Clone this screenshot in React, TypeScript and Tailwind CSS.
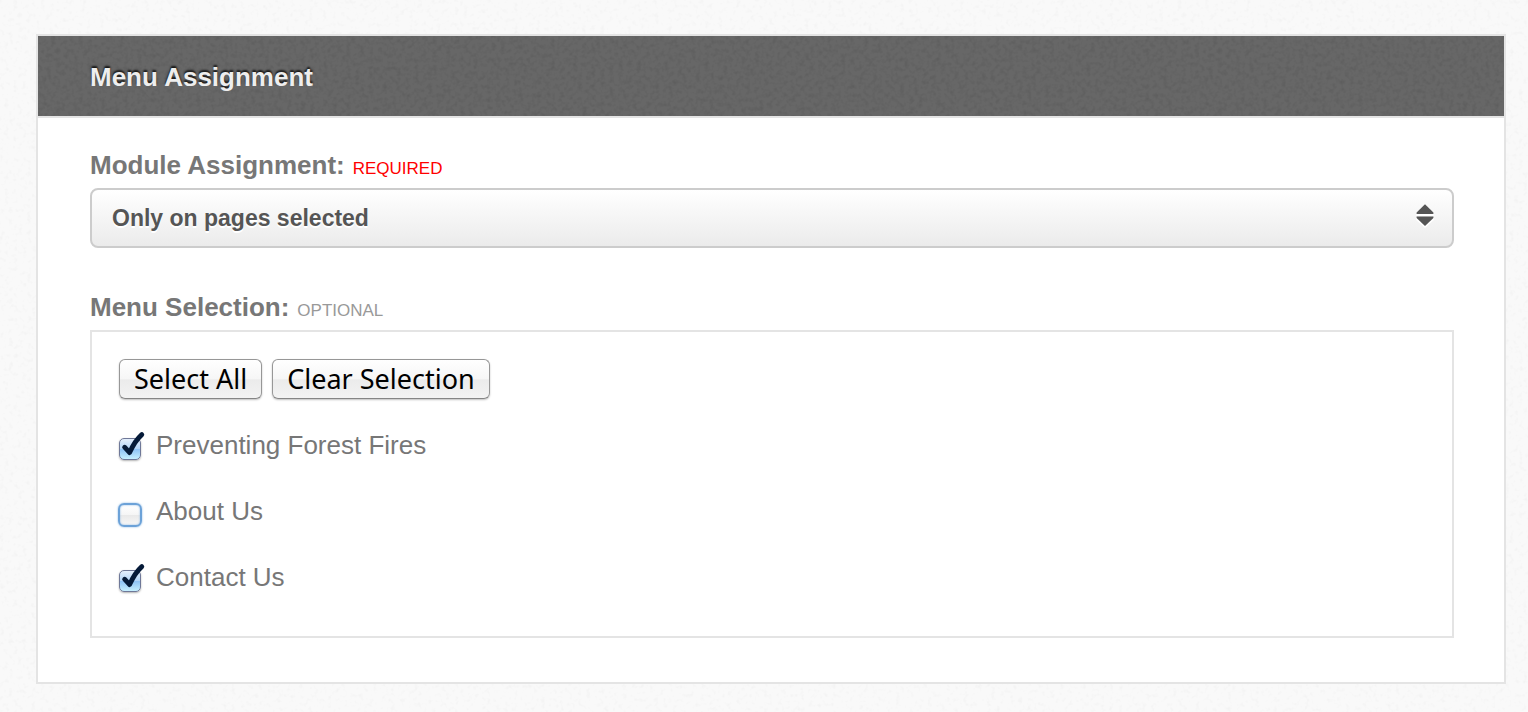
import { useState } from "react";

function Grain({ id, tone }: { id: string; tone: "light" | "dark" }) {
  return (
    <svg
      aria-hidden="true"
      className="pointer-events-none absolute inset-0 h-full w-full"
    >
      <filter id={id} x="0" y="0" width="100%" height="100%">
        <feTurbulence
          type="fractalNoise"
          baseFrequency="0.22"
          numOctaves="2"
          seed="4"
          stitchTiles="stitch"
        />
        <feColorMatrix
          type="matrix"
          values={
            tone === "dark"
              ? "0 0 0 0 0  0 0 0 0 0  0 0 0 0 0  0.9 0 0 0 -0.39"
              : "0 0 0 0 0  0 0 0 0 0  0 0 0 0 0  0.3 0 0 0 -0.15"
          }
        />
      </filter>
      <rect
        width="100%"
        height="100%"
        filter={`url(#${id})`}
        opacity={tone === "dark" ? 0.2 : 0.22}
      />
    </svg>
  );
}

function PushButton({
  children,
  onClick,
}: {
  children: string;
  onClick: () => void;
}) {
  return (
    <button
      type="button"
      onClick={onClick}
      className="flex h-10 items-center rounded-md border border-[#979797] border-b-[#858585] bg-[linear-gradient(#ffffff_0%,#f6f6f6_50%,#ebebeb_52%,#f3f3f3_100%)] px-3.5 font-['Noto_Sans',sans-serif] text-[27px] whitespace-nowrap text-black shadow-[0_1px_2px_rgba(0,0,0,0.25)]"
    >
      {children}
    </button>
  );
}

type Page = { id: string; label: string; checked: boolean; active?: boolean };

function PageOption({ page, onToggle }: { page: Page; onToggle: () => void }) {
  return (
    <li className="flex h-[30px] items-start leading-[30px]">
      <span className="relative mt-[7px] mr-3.5 block size-6">
        <input
          id={page.id}
          type="checkbox"
          checked={page.checked}
          onChange={onToggle}
          className={
            page.active
              ? "block size-6 appearance-none rounded-md border-2 border-[#6ca2d8] bg-[linear-gradient(#ffffff_0%,#f5f5f5_50%,#e9e9e9_52%,#f7f7f7_100%)] shadow-[0_0_2px_#7fb0e0,inset_0_0_2px_#7fb0e0] checked:bg-[linear-gradient(#d5e7fb,#8fc2f3_52%,#c5edff)]"
              : "m-px block size-[22px] appearance-none rounded-[5px] border border-[#6f7898] bg-[linear-gradient(#ffffff,#ececec)] shadow-[0_1px_2px_rgba(0,0,0,0.3)] checked:bg-[linear-gradient(#e4effc_0%,#b3d5f8_48%,#8fc3f5_52%,#c6f0ff_100%)]"
          }
        />
        {page.checked && (
          <svg
            aria-hidden="true"
            viewBox="0 0 28 30"
            className="pointer-events-none absolute -top-1.5 left-0 h-[30px] w-7"
          >
            <path
              d="M6.6 16.2 L11.6 21.6 C14.5 15 18.5 8.4 23.8 3.6"
              fill="none"
              stroke="#051a38"
              strokeWidth="4.8"
              strokeLinecap="round"
              strokeLinejoin="round"
            />
          </svg>
        )}
      </span>
      <label htmlFor={page.id}>{page.label}</label>
    </li>
  );
}

export default function App() {
  const [assignment, setAssignment] = useState("selected");
  const [pages, setPages] = useState<Page[]>([
    { id: "fires", label: "Preventing Forest Fires", checked: true },
    { id: "about", label: "About Us", checked: false, active: true },
    { id: "contact", label: "Contact Us", checked: true },
  ]);

  const setAll = (checked: boolean) =>
    setPages(pages.map((p) => ({ ...p, checked })));
  const toggle = (id: string) =>
    setPages(pages.map((p) => (p.id === id ? { ...p, checked: !p.checked } : p)));

  return (
    <main className="relative min-h-screen bg-[#f9f9f9] pt-[34px] pr-[22px] pb-7 pl-9 font-['Liberation_Sans',Arial,sans-serif] text-[26px] leading-[30px] text-[#777777]">
      <Grain id="page-grain" tone="light" />
      <section className="relative border-2 border-[#e4e4e4] bg-white">
        <header className="relative border-b-2 border-[#e4e4e4] bg-[#676767] pt-[26px] pr-[50px] pb-6 pl-[52px]">
          <Grain id="header-grain" tone="dark" />
          <h1 className="relative font-bold text-[#eeeeee] [text-shadow:0_-2px_2px_rgba(0,0,0,0.8)]">
            Menu Assignment
          </h1>
        </header>

        <form className="pt-8 pr-[50px] pb-11 pl-[52px]">
          <div className="flex items-baseline gap-2">
            <label htmlFor="assignment" className="font-bold">
              Module Assignment:
            </label>
            <span className="text-[17px] leading-5 text-[#ff0000]">REQUIRED</span>
          </div>
          <div className="relative mt-2">
            <select
              id="assignment"
              value={assignment}
              onChange={(e) => setAssignment(e.target.value)}
              className="block h-[60px] w-full appearance-none rounded-lg border-2 border-[#cccccc] bg-[linear-gradient(#ffffff,#ebebeb)] px-5 text-[23px] font-bold text-[#555555] [text-shadow:0_2px_0_#ffffff]"
            >
              <option value="all">On all pages</option>
              <option value="none">No pages</option>
              <option value="selected">Only on pages selected</option>
              <option value="except">On all pages except those selected</option>
            </select>
            <svg
              aria-hidden="true"
              viewBox="0 0 18 24"
              className="pointer-events-none absolute top-4 right-5 h-6 w-[18px]"
            >
              <path
                d="M9 2.5 L17.8 10 V12 H0.2 V10 Z M0.2 14 H17.8 V16 L9 24 L0.2 16 Z"
                fill="#fff"
              />
              <path d="M9 0.3 L17.4 8.4 V10 H0.6 V8.4 Z" fill="#555" />
              <path d="M0.6 12.5 H17.4 V14 L9 22 L0.6 14 Z" fill="#555" />
            </svg>
          </div>

          <fieldset className="mt-11">
            <legend className="flex items-baseline gap-2">
              <span className="font-bold">Menu Selection:</span>
              <span className="text-[17px] leading-5 text-[#999999]">OPTIONAL</span>
            </legend>
            <div className="mt-2 border-2 border-[#e4e4e4] px-[26px] pt-[27px] pb-11">
              <div className="flex gap-2.5 pl-px">
                <PushButton onClick={() => setAll(true)}>Select All</PushButton>
                <PushButton onClick={() => setAll(false)}>Clear Selection</PushButton>
              </div>
              <ul className="mt-[31px] flex flex-col gap-9">
                {pages.map((page) => (
                  <PageOption key={page.id} page={page} onToggle={() => toggle(page.id)} />
                ))}
              </ul>
            </div>
          </fieldset>
        </form>
      </section>
    </main>
  );
}
